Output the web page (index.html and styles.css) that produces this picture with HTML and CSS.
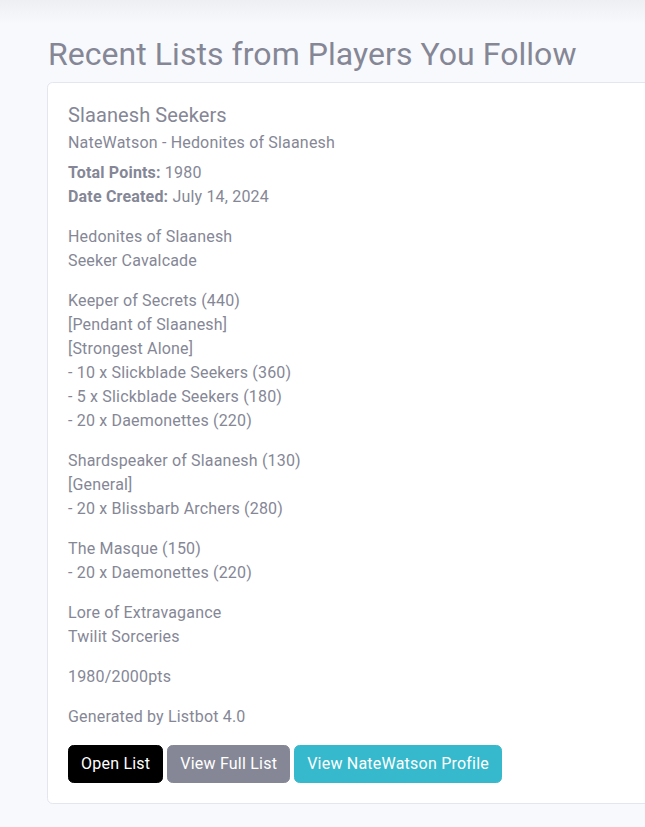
FILE: index.html
```html
<!DOCTYPE html>
<html lang="en">
<head>
<meta charset="utf-8">
<title>Recent Lists</title>
<link rel="stylesheet" href="styles.css">
</head>
<body>
<div class="topshade"></div>
<div class="container">
  <h2 class="page-title">Recent Lists from Players You Follow</h2>
  <div class="card">
    <div class="card-body">
      <h5 class="card-title">Slaanesh Seekers</h5>
      <h6 class="card-subtitle">NateWatson - Hedonites of Slaanesh</h6>
      <p><strong>Total Points:</strong> 1980<br><strong>Date Created:</strong> July 14, 2024</p>
      <p>Hedonites of Slaanesh<br>Seeker Cavalcade</p>
      <p>Keeper of Secrets (440)<br>[Pendant of Slaanesh]<br>[Strongest Alone]<br>- 10 x Slickblade Seekers (360)<br>- 5 x Slickblade Seekers (180)<br>- 20 x Daemonettes (220)</p>
      <p>Shardspeaker of Slaanesh (130)<br>[General]<br>- 20 x Blissbarb Archers (280)</p>
      <p>The Masque (150)<br>- 20 x Daemonettes (220)</p>
      <p>Lore of Extravagance<br>Twilit Sorceries</p>
      <p>1980/2000pts</p>
      <p>Generated by Listbot 4.0</p>
      <div class="actions">
        <a class="btn btn-dark" href="#">Open List</a>
        <a class="btn btn-secondary" href="#">View Full List</a>
        <a class="btn btn-info" href="#">View NateWatson Profile</a>
      </div>
    </div>
  </div>
</div>
</body>
</html>
```
FILE: styles.css
```css
html, body {
  margin: 0;
  padding: 0;
  overflow: hidden;
}
body {
  background: #f8f9fc;
  color: #858796;
  font-family: Roboto, "Liberation Sans", sans-serif;
  font-size: 16px;
  line-height: 1.5;
  width: 645px;
  height: 827px;
  position: relative;
}
.topshade {
  position: absolute;
  left: 0;
  top: 0;
  right: 0;
  height: 24px;
  background: linear-gradient(#eeeff3, rgba(248, 249, 252, 0));
}
.container {
  padding: 35px 0 0 47px;
  width: 720px;
}
.page-title {
  margin: 0 0 9px 1px;
  font-size: 32px;
  font-weight: 400;
  line-height: 1.2;
  color: #858796;
  letter-spacing: 0.05px;
}
.card {
  background: #fff;
  border: 1px solid #e3e6f0;
  border-radius: 5.6px;
}
.card-body {
  padding: 20px;
  letter-spacing: 0.18px;
}
.card-title {
  margin: 0 0 12px;
  font-size: 20px;
  font-weight: 400;
  line-height: 1.2;
  letter-spacing: 0.1px;
}
.card-subtitle {
  margin: -6px 0 8px;
  font-size: 16px;
  font-weight: 400;
  line-height: 1.2;
}
p {
  margin: 0 0 16px;
}
strong {
  font-weight: 700;
}
.actions {
  display: flex;
  gap: 4px;
}
.btn {
  display: inline-block;
  padding: 6px 12px;
  font-size: 16px;
  line-height: 24px;
  color: #fff;
  text-decoration: none;
  border-radius: 5.6px;
  border: 1px solid transparent;
  letter-spacing: 0.22px;
}
.btn-dark { background: #000; border-color: #000; }
.btn-secondary { background: #858796; border-color: #858796; }
.btn-info { background: #36b9cc; border-color: #36b9cc; }
```
